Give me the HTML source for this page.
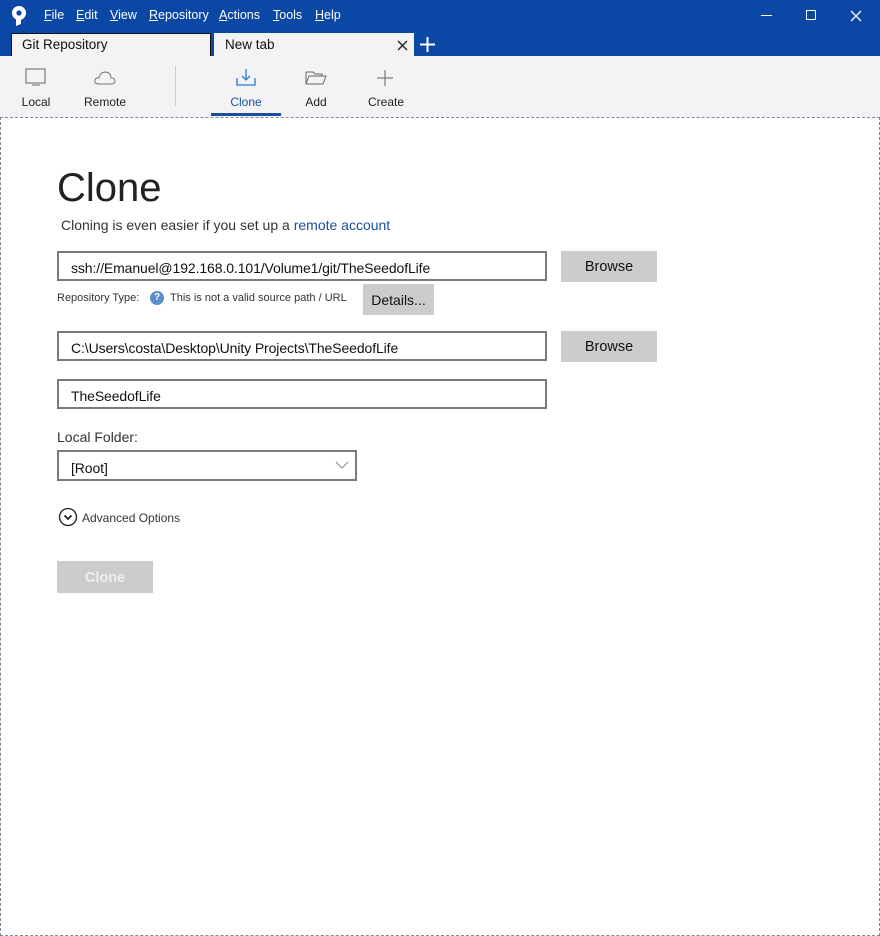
<!DOCTYPE html>
<html><head><meta charset="utf-8"><style>
*{margin:0;padding:0;box-sizing:border-box}
body{width:880px;height:936px;overflow:hidden;background:#fff;font-family:"Liberation Sans","DejaVu Sans",sans-serif;position:relative}
.abs{position:absolute}
.top{left:0;top:0;width:880px;height:56px;background:#0b47a5}
.menu{top:8px;font-size:12.5px;color:#fff}
.menu span{position:absolute;white-space:nowrap}
.tab{top:33px;height:23px;font-size:13.5px;color:#111;padding:3px 0 0 10px;border:1px solid #111;border-bottom:none}
.tb{left:0;top:56px;width:880px;height:61px;background:#f3f3f5}
.tl{font-size:12px;color:#222;top:95px;text-align:center;width:60px}
.content{left:0;top:117px;width:880px;height:819px;border:1px dashed #7b8a99}
.inp{border:2px solid #7a7a7a;height:30px;font-size:14px;color:#111;padding:7px 0 0 12px;white-space:nowrap;letter-spacing:-0.1px}
.btn{background:#cccccc;font-size:14.5px;color:#111;text-align:center}
</style></head><body>
<div class="abs top"></div>
<svg class="abs" style="left:10px;top:5px" width="18" height="22" viewBox="0 0 18 22"><circle cx="9" cy="8" r="7" fill="#fff"/><circle cx="9" cy="8" r="2.6" fill="#0b47a5"/><path d="M6 13 L6 21 L11 19 L11 13Z" fill="#fff"/></svg>
<div class="abs menu" style="left:0;width:400px">
<span style="left:44px"><u>F</u>ile</span><span style="left:76px"><u>E</u>dit</span><span style="left:110px"><u>V</u>iew</span><span style="left:149px"><u>R</u>epository</span><span style="left:219px"><u>A</u>ctions</span><span style="left:273px"><u>T</u>ools</span><span style="left:315px"><u>H</u>elp</span></div>
<div class="abs" style="left:761px;top:15px;width:11px;height:1px;background:#fff"></div>
<div class="abs" style="left:806px;top:10px;width:10px;height:10px;border:1px solid #fff"></div>
<svg class="abs" style="left:850px;top:10px" width="12" height="12"><path d="M1 1L11 11M11 1L1 11" stroke="#fff" stroke-width="1.3"/></svg>
<div class="abs tab" style="left:11px;width:200px;background:#f3f3f5">Git Repository</div>
<div class="abs tab" style="left:214px;width:200px;background:#f3f3f5;border-color:#f3f3f5">New tab</div>
<svg class="abs" style="left:397px;top:40px" width="11" height="11"><path d="M1 1L10 10M10 1L1 10" stroke="#222" stroke-width="1.4"/></svg>
<svg class="abs" style="left:419px;top:36px" width="17" height="17"><path d="M8.5 1V16M1 8.5H16" stroke="#fff" stroke-width="2"/></svg>
<div class="abs tb"></div>
<svg class="abs" style="left:25px;top:68px" width="22" height="20"><rect x="1" y="1" width="19" height="14" fill="none" stroke="#666"/><path d="M7 17H15" stroke="#666"/></svg>
<svg class="abs" style="left:93px;top:70px" width="24" height="16"><path d="M6 14 Q1 14 2 10 Q3 7 6 8 Q7 2 13 2 Q18 3 18 8 Q22 8 22 11 Q22 14 18 14Z" fill="none" stroke="#777"/></svg>
<div class="abs" style="left:175px;top:66px;width:1px;height:40px;background:#ccc"></div>
<svg class="abs" style="left:235px;top:68px" width="22" height="20"><path d="M11 1V12M7 8L11 12L15 8" fill="none" stroke="#2d7bd1" stroke-width="1.3"/><path d="M2 10V17H20V10" fill="none" stroke="#2d7bd1" stroke-width="1.3"/></svg>
<svg class="abs" style="left:305px;top:70px" width="22" height="16"><path d="M1 2H8L10 4H17V6M1 2V14L4 6H21L18 14H1" fill="none" stroke="#666"/></svg>
<svg class="abs" style="left:376px;top:69px" width="18" height="18"><path d="M9 1V17M1 9H17" stroke="#666" stroke-width="1"/></svg>
<div class="abs tl" style="left:6px">Local</div>
<div class="abs tl" style="left:75px">Remote</div>
<div class="abs tl" style="left:216px;color:#1a4fa0">Clone</div>
<div class="abs tl" style="left:286px">Add</div>
<div class="abs tl" style="left:356px">Create</div>
<div class="abs" style="left:211px;top:113px;width:70px;height:3px;background:#1a4fa0"></div>
<div class="abs content"></div>
<div class="abs" style="left:57px;top:166px;font-size:40px;color:#222">Clone</div>
<div class="abs" style="left:61px;top:217px;font-size:14px;color:#333">Cloning is even easier if you set up a <span style="color:#1a4fa0">remote account</span></div>
<div class="abs inp" style="left:57px;top:251px;width:490px">ssh://Emanuel@192.168.0.101/Volume1/git/TheSeedofLife</div>
<div class="abs btn" style="left:561px;top:251px;width:96px;height:31px;padding-top:8px">Browse</div>
<div class="abs" style="left:57px;top:292px;font-size:11px;color:#333">Repository Type:</div>
<div class="abs" style="left:150px;top:291px;width:14px;height:14px;border-radius:50%;background:#5b8fc9;color:#fff;font-size:10px;text-align:center;line-height:14px;font-weight:bold">?</div>
<div class="abs" style="left:170px;top:292px;font-size:11px;color:#333">This is not a valid source path / URL</div>
<div class="abs btn" style="left:363px;top:284px;width:71px;height:31px;padding-top:8px;font-size:14px">Details...</div>
<div class="abs inp" style="left:57px;top:331px;width:490px">C:\Users\costa\Desktop\Unity Projects\TheSeedofLife</div>
<div class="abs btn" style="left:561px;top:331px;width:96px;height:31px;padding-top:8px">Browse</div>
<div class="abs inp" style="left:57px;top:379px;width:490px">TheSeedofLife</div>
<div class="abs" style="left:57px;top:429px;font-size:14px;color:#333">Local Folder:</div>
<div class="abs inp" style="left:57px;top:450px;width:300px;height:31px;padding-top:8px">[Root]</div>
<svg class="abs" style="left:335px;top:461px" width="14" height="9"><path d="M1 1L7 7L13 1" fill="none" stroke="#888"/></svg>
<svg class="abs" style="left:58px;top:507px" width="20" height="20"><circle cx="10" cy="10" r="8.5" fill="none" stroke="#222" stroke-width="1.3"/><path d="M6.5 8.5L10 12L13.5 8.5" fill="none" stroke="#222" stroke-width="1.8"/></svg>
<div class="abs" style="left:82px;top:511px;font-size:12px;color:#333">Advanced Options</div>
<div class="abs btn" style="left:57px;top:561px;width:96px;height:32px;padding-top:9px;color:#eee;font-weight:bold">Clone</div>
</body></html>
